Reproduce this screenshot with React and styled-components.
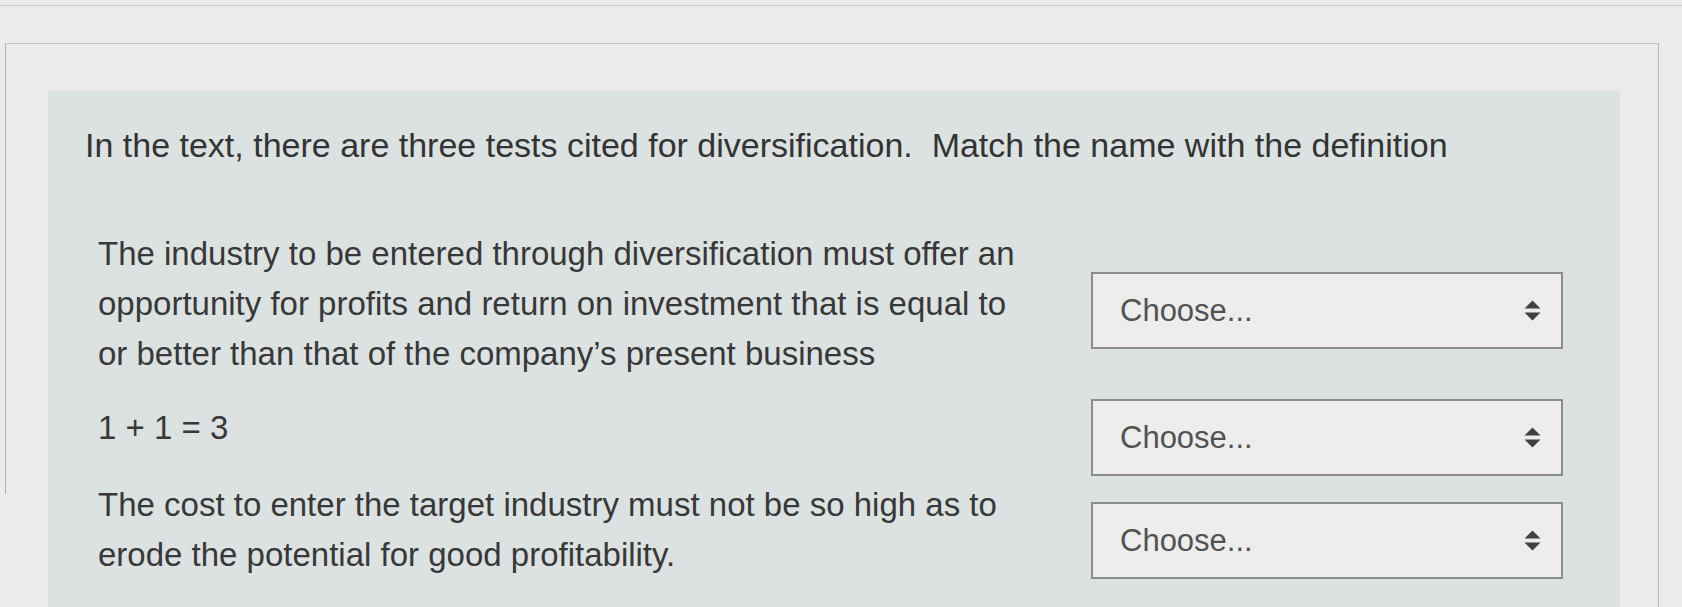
import styled, { createGlobalStyle } from 'styled-components'

const GlobalStyle = createGlobalStyle`
    html, body {
        margin: 0;
        background: #ecebea;
    }
    body {
        font-family: "Liberation Sans", Arial, Helvetica, sans-serif;
        color: #363636;
        overflow: hidden;
    }
`

const questions = [
    {
        lines: [
            'The industry to be entered through diversification must offer an',
            'opportunity for profits and return on investment that is equal to',
            'or better than that of the company\u2019s present business',
        ],
        gap: 0,
        textOffset: 0,
        selectOffset: 43,
    },
    {
        lines: ['1 + 1 = 3'],
        gap: 20,
        textOffset: 4,
        selectOffset: 0,
    },
    {
        lines: [
            'The cost to enter the target industry must not be so high as to',
            'erode the potential for good profitability.',
        ],
        gap: 4,
        textOffset: 0,
        selectOffset: 22,
    },
]

// up/down arrows on the right of each dropdown
const SortArrows = () => (
    <svg width="17" height="21" viewBox="0 0 17 21">
        <polygon points="8.5,0.5 16.5,8.5 0.5,8.5" fill="#404040" />
        <polygon points="0.5,12.5 16.5,12.5 8.5,20.5" fill="#404040" />
    </svg>
)

export default function App() {
    return (
        <Page>
            <GlobalStyle />
            <TopRule />
            <Frame>
                <LeftEdge />
                <Panel>
                    <Title>In the text, there are three tests cited for diversification.&nbsp; Match the name with the definition</Title>
                    <QuestionList>
                        {questions.map((q, i) => (
                            <Row key={i} $gap={q.gap}>
                                <Prompt $offset={q.textOffset}>
                                    {q.lines.map((line, j) => (
                                        <span key={j}>
                                            {line}
                                            {j < q.lines.length - 1 && <br />}
                                        </span>
                                    ))}
                                </Prompt>
                                <Select $offset={q.selectOffset} role="combobox">
                                    <span>Choose...</span>
                                    <SortArrows />
                                </Select>
                            </Row>
                        ))}
                    </QuestionList>
                </Panel>
            </Frame>
        </Page>
    )
}

const Page = styled.div`
    height: 607px;
    overflow: hidden;
`

const TopRule = styled.div`
    height: 5px;
    border-bottom: 1px solid #cfcdcc;
`

const Frame = styled.div`
    display: flex;
    align-items: flex-start;
    margin: 37px 23px 0 5px;
    height: 600px;
    border-top: 1px solid #c4c3c2;
    border-right: 1px solid #b9b8b7;
`

const LeftEdge = styled.div`
    flex-shrink: 0;
    width: 1px;
    height: 450px;
    background: #b3b2b1;
`

const Panel = styled.div`
    box-sizing: border-box;
    flex-shrink: 0;
    width: 1572px;
    height: 560px;
    margin: 47px 0 0 42px;
    padding: 29px 0 0 37px;
    background: #dce2e2;
`

const Title = styled.p`
    margin: 0;
    font-size: 34px;
    line-height: 50px;
    color: #333;
    white-space: nowrap;
`

const QuestionList = styled.div`
    margin-top: 59px;
    padding-left: 13px;
`

const Row = styled.div`
    display: flex;
    align-items: flex-start;
    margin-top: ${p => p.$gap}px;
`

const Prompt = styled.div`
    flex-shrink: 0;
    width: 993px;
    margin-top: ${p => p.$offset}px;
    font-size: 33px;
    line-height: 50px;
    color: #383838;
    white-space: nowrap;
`

const Select = styled.div`
    box-sizing: border-box;
    display: flex;
    align-items: center;
    justify-content: space-between;
    width: 472px;
    height: 77px;
    margin-top: ${p => p.$offset}px;
    padding: 0 20px 0 27px;
    border: 2px solid #8c8c8c;
    background: #eeedeb;
    font-size: 31px;
    color: #525252;
`
